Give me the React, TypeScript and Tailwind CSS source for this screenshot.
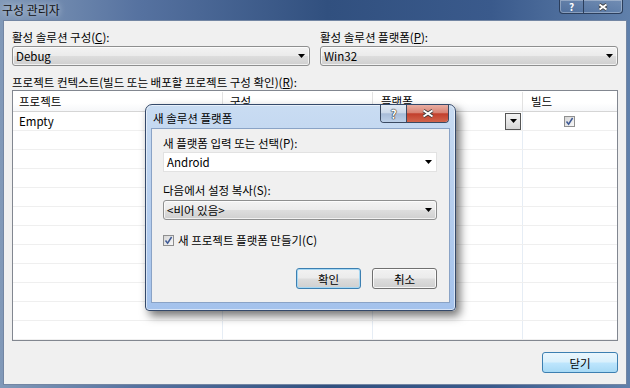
import React from 'react';

const font = "font-['Noto_Sans_CJK_KR',sans-serif]";

function Arrow() {
  return (
    <svg width="7" height="4" viewBox="0 0 7 4" className="shrink-0">
      <path d="M0 0H7L3.5 4Z" fill="#000" />
    </svg>
  );
}

function Combo({ text, editable }: { text: string; editable?: boolean }) {
  return (
    <div
      className={
        editable
          ? 'h-[20px] flex items-center justify-between pl-[3px] pr-[4px] bg-white border border-[#e2e2e2]'
          : 'h-[20px] flex items-center justify-between pl-[3px] pr-[4px] rounded-[3px] border border-[#8e8f8f] bg-[linear-gradient(180deg,#f3f3f3_0%,#ebebeb_48%,#dddddd_52%,#cfcfcf_100%)] shadow-[inset_0_0_0_1px_rgba(255,255,255,0.7)]'
      }
    >
      <span className="leading-[14px]">{text}</span>
      <Arrow />
    </div>
  );
}

function Check() {
  return (
    <div className="w-[11px] h-[11px] shrink-0 border border-[#8f8f8f] bg-[linear-gradient(135deg,#d6d6d6,#f8f8f8)] flex items-center justify-center">
      <svg width="9" height="9" viewBox="0 0 9 9">
        <path d="M1.5 4.5L3.6 7.2L7.6 1" fill="none" stroke="#3f5a95" strokeWidth="1.5" />
      </svg>
    </div>
  );
}

function Btn({ label, kind }: { label: string; kind: 'normal' | 'default' | 'focus' }) {
  const cls =
    kind === 'focus'
      ? 'border-[#3c7fb1] bg-[linear-gradient(180deg,#eaf6fd_0%,#d9f0fc_48%,#bee6fd_52%,#a7d9f5_100%)]'
      : kind === 'default'
        ? 'border-[#3c7fb1] bg-[linear-gradient(180deg,#f2f2f2_0%,#ebebeb_48%,#dddddd_52%,#cfcfcf_100%)] shadow-[inset_0_0_0_1px_#a6d8f4]'
        : 'border-[#707070] bg-[linear-gradient(180deg,#f2f2f2_0%,#ebebeb_48%,#dddddd_52%,#cfcfcf_100%)] shadow-[inset_0_0_0_1px_rgba(255,255,255,0.8)]';
  return (
    <div className={`h-[21px] rounded-[3px] border flex items-center justify-center ${cls}`}>
      <span className="leading-[14px]">{label}</span>
    </div>
  );
}

function WinX({ w, h }: { w: number; h: number }) {
  return (
    <svg width={w} height={h} viewBox={`0 0 ${w} ${h}`}>
      <path d={`M1.5 1.5L${w - 1.5} ${h - 1.5}M${w - 1.5} 1.5L1.5 ${h - 1.5}`} stroke="#3a3a3a" strokeWidth="3.4" />
      <path d={`M1.5 1.5L${w - 1.5} ${h - 1.5}M${w - 1.5} 1.5L1.5 ${h - 1.5}`} stroke="#fff" strokeWidth="2" />
    </svg>
  );
}

const rows = Array.from({ length: 12 }, (_, i) => i);

export default function App() {
  return (
    <div
      className={`relative w-[630px] h-[388px] overflow-hidden flex flex-col text-[11.5px] text-black ${font} bg-[linear-gradient(90deg,#8199b8_0%,#5672a0_22%,#31507f_52%,#3a5a8c_78%,#6080ab_100%)]`}
    >
      {/* title bar */}
      <div className="h-[20px] flex items-start justify-between pl-[2px] pr-[7px] shrink-0">
        <span className="leading-[19px] text-[12px] text-[#111] [text-shadow:0_0_6px_rgba(255,255,255,0.9)]">구성 관리자</span>
        <div className="flex h-[14px] rounded-b-[4px] border border-t-0 border-[#2b3e5c] overflow-hidden shadow-[inset_0_0_0_1px_rgba(255,255,255,0.3)] bg-[linear-gradient(180deg,rgba(255,255,255,0.12),rgba(255,255,255,0.02))]">
          <div className="w-[24px] flex items-center justify-center border-r border-[#2b3e5c] text-white text-[10px] font-bold leading-[13px]">?</div>
          <div className="w-[38px] flex items-center justify-center">
            <WinX w={10} h={8} />
          </div>
        </div>
      </div>

      {/* client area */}
      <div className="flex-1 mx-[3px] mb-[3px] bg-[#f0f0f0] border border-[#7386a3] flex flex-col px-[8px] pt-[9px]">
        <div className="grid grid-cols-2 gap-x-[10px]">
          <div>
            <div className="leading-[15px]">
              활성 솔루션 구성(<span className="underline">C</span>):
            </div>
            <div className="mt-[1px]">
              <Combo text="Debug" />
            </div>
          </div>
          <div>
            <div className="leading-[15px]">
              활성 솔루션 플랫폼(<span className="underline">P</span>):
            </div>
            <div className="mt-[1px]">
              <Combo text="Win32" />
            </div>
          </div>
        </div>

        <div className="leading-[15px] mt-[9px]">
          프로젝트 컨텍스트(빌드 또는 배포할 프로젝트 구성 확인)(<span className="underline">R</span>):
        </div>

        {/* table */}
        <div className="h-[251px] border border-[#828790] bg-white overflow-hidden shrink-0">
          <div className="h-[21px] flex border-b border-[#d5d5d5] pt-[1px] bg-[linear-gradient(180deg,#ffffff_0%,#ffffff_60%,#f6f7f9_100%)]">
            <div className="w-[210px] pl-[6px] border-r border-[#e2e2e2] flex items-center">프로젝트</div>
            <div className="w-[150px] pl-[7px] border-r border-[#e2e2e2] flex items-center">구성</div>
            <div className="w-[150px] pl-[8px] border-r border-[#e2e2e2] flex items-center">플랫폼</div>
            <div className="flex-1 pl-[8px] flex items-center">빌드</div>
          </div>
          {rows.map((i) => (
            <div key={i} className="h-[19px] flex border-b border-[#efefef]">
              <div className="w-[210px] pl-[6px] pt-[2px] border-r border-[#e6edf5] flex items-center">{i === 0 ? 'Empty' : ''}</div>
              <div className="w-[150px] pl-[7px] pt-[2px] border-r border-[#e6edf5] flex items-center">{i === 0 ? 'Debug' : ''}</div>
              <div className="w-[150px] pl-[7px] pr-[1px] border-r border-[#e6edf5] flex items-center justify-between">
                {i === 0 ? (
                  <>
                    <span className="pt-[2px]">Win32</span>
                    <div className="w-[16px] h-[17px] border border-[#555] bg-[linear-gradient(180deg,#f4f4f4_0%,#e6e6e6_50%,#d6d6d6_100%)] flex items-center justify-center">
                      <Arrow />
                    </div>
                  </>
                ) : null}
              </div>
              <div className="flex-1 flex items-center justify-center pr-[2px]">{i === 0 ? <Check /> : null}</div>
            </div>
          ))}
        </div>

        <div className="flex justify-end mt-[11px]">
          <div className="w-[76px]">
            <Btn label="닫기" kind="focus" />
          </div>
        </div>
      </div>

      {/* modal dialog */}
      <div className="absolute left-[145px] top-[104px] w-[311px] h-[207px] flex flex-col rounded-t-[7px] rounded-b-[4px] border border-[#34496a] bg-[linear-gradient(180deg,#c9dcf2_0%,#b9d0ee_40%,#a4c2ec_100%)] shadow-[4px_5px_10px_rgba(0,0,0,0.55),inset_0_0_0_1px_rgba(255,255,255,0.55)]">
        <div className="h-[23px] shrink-0 pl-[7px] pt-[3px] flex items-center">
          <span className="leading-[15px]">새 솔루션 플랫폼</span>
        </div>
        <div className="absolute right-[6px] top-0 flex h-[18px] rounded-b-[4px] border border-t-0 border-[#3a4a62] overflow-hidden">
          <div className="w-[26px] flex items-center justify-center border-r border-[#3a4a62] bg-[linear-gradient(180deg,#e3ebf5_0%,#cbd8e9_45%,#a8bcd8_52%,#bdd0e8_100%)] text-white text-[12px] font-bold leading-[16px] [text-shadow:0_0_1px_#222,0_0_1px_#222,0_0_1px_#222]">
            ?
          </div>
          <div className="w-[41px] flex items-center justify-center bg-[linear-gradient(180deg,#e9aea3_0%,#d88373_45%,#c23f2c_52%,#d2654c_100%)]">
            <WinX w={12} h={9} />
          </div>
        </div>
        <div className="flex-1 mx-[5px] mb-[7px] bg-[#f0f0f0] border border-[#8aa3c6] flex flex-col pl-[11px] pr-[12px] pt-[7px]">
          <div className="leading-[15px]">새 플랫폼 입력 또는 선택(P):</div>
          <div className="mt-[1px]">
            <Combo text="Android" editable />
          </div>
          <div className="leading-[15px] mt-[11px]">다음에서 설정 복사(S):</div>
          <div className="mt-[2px]">
            <Combo text="<비어 있음>" />
          </div>
          <div className="mt-[14px] flex items-center gap-[4px] h-[13px]">
            <Check />
            <span className="leading-[13px]">새 프로젝트 플랫폼 만들기(C)</span>
          </div>
          <div className="mt-[21px] flex justify-end gap-[11px]">
            <div className="w-[65px]">
              <Btn label="확인" kind="default" />
            </div>
            <div className="w-[65px]">
              <Btn label="취소" kind="normal" />
            </div>
          </div>
        </div>
      </div>
    </div>
  );
}
